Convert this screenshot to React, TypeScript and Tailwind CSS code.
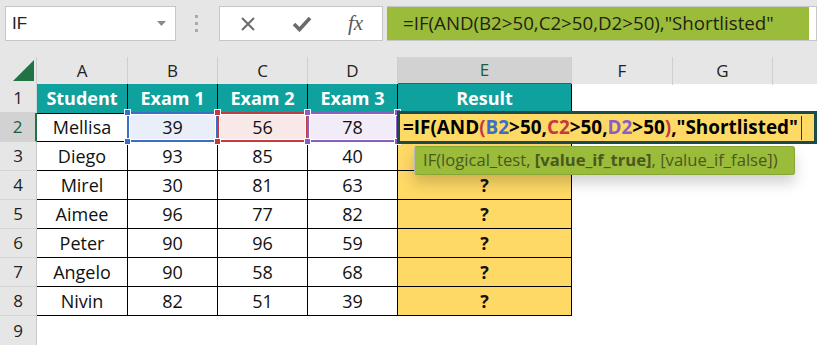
import React from "react";

const FONT = { fontFamily: '"Open Sans", "Liberation Sans", sans-serif' };

const rows: string[][] = [
  ["Mellisa", "39", "56", "78"],
  ["Diego", "93", "85", "40"],
  ["Mirel", "30", "81", "63"],
  ["Aimee", "96", "77", "82"],
  ["Peter", "90", "96", "59"],
  ["Angelo", "90", "58", "68"],
  ["Nivin", "82", "51", "39"],
];

const GRID = "grid grid-cols-[37px_91px_90px_90px_90px_174px_101px_100px_1fr]";

function Handle({ color, pos }: { color: string; pos: string }) {
  return <div className={`absolute w-[7px] h-[7px] border border-white ${color} ${pos} z-10`} />;
}

function RangeCell({ value, fill, border, handle }: { value: string; fill: string; border: string; handle: string }) {
  return (
    <div className={`relative flex items-center justify-center border-r border-b border-black ${fill}`}>
      <div className={`absolute left-[-1px] top-[-1px] right-[-1px] bottom-[-1px] border-2 ${border}`} />
      <div className="absolute left-[1px] top-[1px] right-[1px] bottom-[1px] border border-white" />
      <Handle color={handle} pos="left-[-4px] top-[-4px]" />
      <Handle color={handle} pos="left-[-4px] bottom-[-4px]" />
      <span className="relative">{value}</span>
    </div>
  );
}

export default function App() {
  return (
    <div className="relative w-[817px] h-[345px] overflow-hidden bg-white text-[#111]" style={FONT}>
      {/* Top bar */}
      <div className="h-[57px] bg-[#e6e6e6] flex items-start pt-[6px]">
        <div className="ml-[5px] w-[171px] h-[35px] bg-white border border-[#c6c6c6] flex items-center justify-between pl-[6px] pr-[9px]">
          <span className="text-[17px] text-[#222]" style={{ fontFamily: '"Liberation Sans", sans-serif' }}>IF</span>
          <svg width="9" height="6" viewBox="0 0 9 6"><path d="M0 0 L9 0 L4.5 5 Z" fill="#8a8a8a" /></svg>
        </div>
        <div className="ml-[19px] mt-[9px] flex flex-col gap-[4px]">
          <div className="w-[3px] h-[3px] bg-[#a9a9a9]" />
          <div className="w-[3px] h-[3px] bg-[#a9a9a9]" />
          <div className="w-[3px] h-[3px] bg-[#a9a9a9]" />
        </div>
        <div className="ml-[21px] w-[164px] h-[35px] bg-white border border-[#c6c6c6] flex items-center">
          <svg className="ml-[20px]" width="16" height="16" viewBox="0 0 16 16">
            <path d="M2 2 L14 14 M14 2 L2 14" stroke="#6b6b6b" strokeWidth="2" />
          </svg>
          <svg className="ml-[36px]" width="20" height="16" viewBox="0 0 20 16">
            <path d="M2 8 L7.5 13.5 L18 2" stroke="#6b6b6b" strokeWidth="3.6" fill="none" />
          </svg>
          <span className="ml-[36px] text-[21px] italic text-[#5a5a5a]" style={{ fontFamily: '"Liberation Serif", serif' }}>fx</span>
        </div>
        <div className="ml-[4px] flex-1 h-[35px] bg-white border border-[#c6c6c6] border-l-0 flex">
          <div className="w-[422px] h-full bg-[#9bbb3b] flex items-center pl-[16px] text-[18.7px] text-[#1f2414] whitespace-nowrap">
            =IF(AND(B2&gt;50,C2&gt;50,D2&gt;50),"Shortlisted"
          </div>
        </div>
      </div>

      {/* Column headers */}
      <div className={`${GRID} h-[27px] bg-[#e6e6e6] text-[17px] text-[#222]`}>
        <div className="relative border-r border-[#cfcfcf]">
          <svg className="absolute left-[13px] top-[3px]" width="21" height="21" viewBox="0 0 21 21">
            <path d="M21 0 L21 21 L0 21 Z" fill="#217346" />
          </svg>
        </div>
        {["A", "B", "C", "D"].map((c) => (
          <div key={c} className="flex items-center justify-center border-r border-[#cfcfcf]">{c}</div>
        ))}
        <div className="flex items-center justify-center bg-[#d2d2d2] border-b-2 border-[#217346] text-[#1d5c3b] border-r border-r-[#cfcfcf]">E</div>
        <div className="flex items-center justify-center border-r border-[#cfcfcf]">F</div>
        <div className="flex items-center justify-center border-r border-[#cfcfcf]">G</div>
        <div />
      </div>

      {/* Row 1 */}
      <div className={`${GRID} h-[29px] text-[18px]`}>
        <div className="flex items-center justify-center bg-[#e6e6e6] border-r border-b border-[#d4d4d4] text-[17px] text-[#222]">1</div>
        {["Student", "Exam 1", "Exam 2", "Exam 3", "Result"].map((h) => (
          <div key={h} className="flex items-center justify-center bg-[#0ea19e] text-white font-bold border-r border-black">{h}</div>
        ))}
        <div />
        <div />
        <div />
      </div>

      {/* Data rows */}
      {rows.map((r, i) => {
        const n = i + 2;
        const sel = n === 2;
        const hidden = n <= 3;
        return (
          <div key={n} className={`${GRID} h-[29px] text-[18px]`}>
            <div
              className={`flex items-center justify-center border-b border-[#d4d4d4] text-[17px] ${
                sel ? "bg-[#d2d2d2] text-[#1d5c3b] border-r-2 border-r-[#217346]" : "bg-[#e6e6e6] text-[#222] border-r border-r-[#c8c8c8]"
              }`}
            >
              {n}
            </div>
            <div className={`flex items-center justify-center border-r border-b border-black ${sel ? "border-t border-t-black" : ""}`}>{r[0]}</div>
            {sel ? (
              <>
                <RangeCell value={r[1]} fill="bg-[#e9eef8]" border="border-[#3b6fc6]" handle="bg-[#3b6fc6]" />
                <RangeCell value={r[2]} fill="bg-[#f9e8e8]" border="border-[#c33a3f]" handle="bg-[#c33a3f]" />
                <div className="relative flex items-center justify-center border-r border-b border-black bg-[#f1ecf8]">
                  <div className="absolute left-[-1px] top-[-1px] right-[-1px] bottom-[-1px] border-2 border-[#8c5ec0]" />
                  <div className="absolute left-[1px] top-[1px] right-[1px] bottom-[1px] border border-white" />
                  <Handle color="bg-[#8c5ec0]" pos="left-[-4px] top-[-4px]" />
                  <Handle color="bg-[#8c5ec0]" pos="left-[-4px] bottom-[-4px]" />
                  <Handle color="bg-[#8c5ec0]" pos="right-[-4px] top-[-4px]" />
                  <Handle color="bg-[#8c5ec0]" pos="right-[-4px] bottom-[-4px]" />
                  <span className="relative">{r[3]}</span>
                </div>
              </>
            ) : (
              <>
                <div className="flex items-center justify-center border-r border-b border-black">{r[1]}</div>
                <div className="flex items-center justify-center border-r border-b border-black">{r[2]}</div>
                <div className="flex items-center justify-center border-r border-b border-black">{r[3]}</div>
              </>
            )}
            <div className="flex items-center justify-center border-r border-b border-black bg-[#fed966] font-bold">{hidden ? "" : "?"}</div>
            <div />
            <div />
            <div />
          </div>
        );
      })}

      {/* Row 9 */}
      <div className={`${GRID} h-[29px]`}>
        <div className="flex items-center justify-center bg-[#e6e6e6] border-r border-[#c8c8c8] text-[17px] text-[#222]">9</div>
      </div>

      {/* In-cell editor */}
      <div className="absolute left-[397px] top-[111px] w-[420px] h-[33px] border-[3px] border-[#1d4a4a] bg-[#fed966] flex items-center pl-[3px] text-[18.9px] font-bold text-black whitespace-nowrap z-20">
        <span>=IF(AND</span>
        <span className="text-[#c33a3f]">(</span>
        <span className="text-[#3b6fc6]">B2</span>
        <span>&gt;50,</span>
        <span className="text-[#c33a3f]">C2</span>
        <span>&gt;50,</span>
        <span className="text-[#8c5ec0]">D2</span>
        <span>&gt;50</span>
        <span className="text-[#c33a3f]">)</span>
        <span>,"Shortlisted"</span>
        <span className="ml-[3px] w-[1px] h-[24px] bg-[#333]" />
      </div>

      {/* Tooltip */}
      <div className="absolute left-[414px] top-[146px] w-[381px] h-[29px] rounded-[3px] bg-[#9bbb3b] border border-[#87a634] border-l-[#b9b9b9] shadow-[0_8px_14px_rgba(0,0,0,0.18)] flex items-center pl-[8px] text-[16.6px] text-[#4a5820] whitespace-nowrap z-20">
        IF(logical_test,&nbsp;<span className="font-bold">[value_if_true]</span>, [value_if_false])
      </div>
    </div>
  );
}
